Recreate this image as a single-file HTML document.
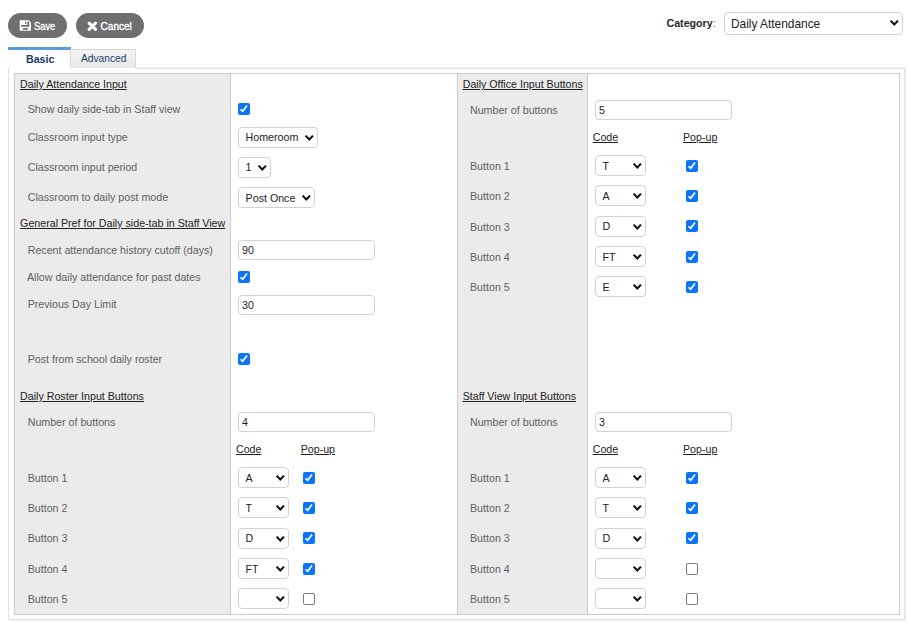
<!DOCTYPE html>
<html><head><meta charset="utf-8"><title>Attendance Preferences</title>
<style>
html,body{margin:0;padding:0;background:#fff;}
body{width:908px;height:623px;position:relative;overflow:hidden;font-family:"Liberation Sans",sans-serif;}
.t{position:absolute;white-space:nowrap;line-height:14px;}
.btn{position:absolute;height:25px;border-radius:13px;background:#6f6f6f;}
.box{position:absolute;border:1px solid #d2d2d2;border-radius:4px;background:#fff;}
.cb{position:absolute;width:12px;height:12px;box-sizing:border-box;border-radius:2px;}
.cb.on{background:#0b75fa;}
.cb.on svg{position:absolute;left:0;top:0;}
.cb.off{border:1px solid #7a7a7a;background:#fff;}
.chev{position:absolute;}
</style></head><body>
<div class="btn" style="left:8px;top:13px;width:59px"></div>
<svg style="position:absolute;left:17px;top:18px" width="16" height="15" viewBox="0 0 16 15"><path fill="#fff" fill-rule="evenodd" d="M2.7 2.3 H11.7 L14 4.6 V12.8 H2.7 Z M4 7 H12.3 V8.8 H4 Z M10.3 3.7 H12.3 V7 H10.3 Z M8 3.7 H9.3 V6 H8 Z M6 9.9 H10.8 V11.8 H6 Z"/></svg>
<div class="t" style="left:34.2px;top:20px;font-size:10px;color:#fff;font-weight:normal;transform:scaleX(0.93);transform-origin:0 0;-webkit-text-stroke:0.35px #fff;">Save</div>
<div class="btn" style="left:76px;top:13px;width:68px"></div>
<svg style="position:absolute;left:87px;top:21px" width="11" height="11" viewBox="0 0 11 11"><path d="M2.2 2.1 L8.5 8.4 M8.5 2.1 L2.2 8.4" stroke="#fff" stroke-width="3" stroke-linecap="round"/></svg>
<div class="t" style="left:100.6px;top:20px;font-size:10px;color:#fff;font-weight:normal;transform:scaleX(1.0);transform-origin:0 0;-webkit-text-stroke:0.35px #fff;">Cancel</div>
<div class="t" style="left:666.5px;top:16px;font-size:10.67px;color:#262626;font-weight:bold;">Category</div>
<div class="t" style="left:713px;top:16px;font-size:10.67px;color:#777;font-weight:normal;">:</div>
<div class="box" style="left:724px;top:12px;width:177px;height:21px"></div>
<div class="t" style="left:731px;top:17px;font-size:11.9px;color:#222;font-weight:normal;">Daily Attendance</div>
<svg class="chev" style="left:888.8px;top:19.1px" width="10.6" height="7.1" viewBox="-1 -1 10.6 7.1"><path d="M0.6 0.6 L4.3 4.5 L8.0 0.6" fill="none" stroke="#111" stroke-width="2.1"/></svg>
<div style="position:absolute;left:8px;top:47px;width:63px;height:3px;background:#5b9bd8"></div>
<div class="t" style="left:26px;top:52px;font-size:10.67px;color:#1d3a63;font-weight:bold;">Basic</div>
<div style="position:absolute;left:70px;top:49px;width:64px;height:18px;border:1px solid #d9d9d9;border-bottom:none;background:linear-gradient(#f4f4f4,#e9e9e9)"></div>
<div class="t" style="left:81px;top:52px;font-size:10.2px;color:#223f69;font-weight:normal;">Advanced</div>
<div style="position:absolute;left:8px;top:68px;width:1px;height:552px;background:#e0e0e0"></div>
<div style="position:absolute;left:8px;top:619px;width:898px;height:1px;background:#e2e2e2"></div>
<div style="position:absolute;left:9px;top:620px;width:897px;height:1px;background:#f1f1f1"></div>
<div style="position:absolute;left:904px;top:67px;width:1px;height:553px;background:#e4e4e4"></div>
<div style="position:absolute;left:905px;top:67px;width:1px;height:554px;background:#efefef"></div>
<div style="position:absolute;left:136px;top:67px;width:769px;height:1px;background:#eeeeee"></div>
<div style="position:absolute;left:136px;top:68px;width:769px;height:1px;background:#e4e4e4"></div>
<div style="position:absolute;left:14px;top:73px;width:884px;height:540px;border:1px solid #cdcdcd;background:#fff"></div>
<div style="position:absolute;left:15px;top:74px;width:215px;height:540px;background:#ebebeb;border-right:1px solid #cdcdcd"></div>
<div style="position:absolute;left:457px;top:74px;width:129px;height:540px;background:#ebebeb;border-left:1px solid #cdcdcd;border-right:1px solid #cdcdcd"></div>
<div class="t" style="left:20.1px;top:77px;font-size:10.67px;color:#222;font-weight:normal;text-decoration:underline;">Daily Attendance Input</div>
<div class="t" style="left:27.7px;top:102px;font-size:10.67px;color:#5f5f5f;font-weight:normal;">Show daily side-tab in Staff view</div>
<div class="cb on" style="left:238px;top:103px"><svg width="12" height="12" viewBox="0 0 12 12"><path d="M2.5 6.3 L4.7 8.2 L9.0 2.6" fill="none" stroke="#fff" stroke-width="1.7"/></svg></div>
<div class="t" style="left:27.7px;top:130px;font-size:10.67px;color:#5f5f5f;font-weight:normal;">Classroom input type</div>
<div class="box" style="left:238px;top:127px;width:78px;height:19px"></div><div class="t" style="left:245.6px;top:130px;font-size:10.67px;color:#222;font-weight:normal;">Homeroom</div><svg class="chev" style="left:303.7px;top:134.3px" width="10.6" height="7.1" viewBox="-1 -1 10.6 7.1"><path d="M0.6 0.6 L4.3 4.5 L8.0 0.6" fill="none" stroke="#111" stroke-width="2.1"/></svg>
<div class="t" style="left:27.7px;top:160px;font-size:10.67px;color:#5f5f5f;font-weight:normal;">Classroom input period</div>
<div class="box" style="left:238px;top:157px;width:31px;height:19px"></div><div class="t" style="left:245.6px;top:160px;font-size:10.67px;color:#222;font-weight:normal;">1</div><svg class="chev" style="left:256.7px;top:164.3px" width="10.6" height="7.1" viewBox="-1 -1 10.6 7.1"><path d="M0.6 0.6 L4.3 4.5 L8.0 0.6" fill="none" stroke="#111" stroke-width="2.1"/></svg>
<div class="t" style="left:27.7px;top:190px;font-size:10.67px;color:#5f5f5f;font-weight:normal;">Classroom to daily post mode</div>
<div class="box" style="left:238px;top:187px;width:75px;height:19px"></div><div class="t" style="left:245.6px;top:191px;font-size:10.67px;color:#222;font-weight:normal;">Post Once</div><svg class="chev" style="left:300.7px;top:194.3px" width="10.6" height="7.1" viewBox="-1 -1 10.6 7.1"><path d="M0.6 0.6 L4.3 4.5 L8.0 0.6" fill="none" stroke="#111" stroke-width="2.1"/></svg>
<div class="t" style="left:20.1px;top:216px;font-size:10.67px;color:#222;font-weight:normal;text-decoration:underline;">General Pref for Daily side-tab in Staff View</div>
<div class="t" style="left:27.7px;top:243px;font-size:10.67px;color:#5f5f5f;font-weight:normal;">Recent attendance history cutoff (days)</div>
<div class="box" style="left:238px;top:240px;width:135px;height:18px"></div><div class="t" style="left:242px;top:243px;font-size:10.67px;color:#222;font-weight:normal;">90</div>
<div class="t" style="left:27px;top:270px;font-size:10.67px;color:#5f5f5f;font-weight:normal;">Allow daily attendance for past dates</div>
<div class="cb on" style="left:238px;top:271px"><svg width="12" height="12" viewBox="0 0 12 12"><path d="M2.5 6.3 L4.7 8.2 L9.0 2.6" fill="none" stroke="#fff" stroke-width="1.7"/></svg></div>
<div class="t" style="left:27.7px;top:297px;font-size:10.67px;color:#5f5f5f;font-weight:normal;">Previous Day Limit</div>
<div class="box" style="left:238px;top:295px;width:135px;height:18px"></div><div class="t" style="left:242px;top:298px;font-size:10.67px;color:#222;font-weight:normal;">30</div>
<div class="t" style="left:27.7px;top:352px;font-size:10.67px;color:#5f5f5f;font-weight:normal;">Post from school daily roster</div>
<div class="cb on" style="left:238px;top:353px"><svg width="12" height="12" viewBox="0 0 12 12"><path d="M2.5 6.3 L4.7 8.2 L9.0 2.6" fill="none" stroke="#fff" stroke-width="1.7"/></svg></div>
<div class="t" style="left:20.1px;top:389px;font-size:10.67px;color:#222;font-weight:normal;text-decoration:underline;">Daily Roster Input Buttons</div>
<div class="t" style="left:27.7px;top:415px;font-size:10.67px;color:#5f5f5f;font-weight:normal;">Number of buttons</div>
<div class="box" style="left:238px;top:412px;width:135px;height:18px"></div><div class="t" style="left:242px;top:415px;font-size:10.67px;color:#222;font-weight:normal;">4</div>
<div class="t" style="left:236px;top:442px;font-size:10.67px;color:#222;font-weight:normal;text-decoration:underline;">Code</div>
<div class="t" style="left:300.7px;top:442px;font-size:10.67px;color:#222;font-weight:normal;text-decoration:underline;">Pop-up</div>
<div class="t" style="left:27.7px;top:471px;font-size:10.67px;color:#5f5f5f;font-weight:normal;">Button 1</div>
<div class="box" style="left:238px;top:467px;width:49px;height:19px"></div><div class="t" style="left:245.6px;top:471px;font-size:10.67px;color:#222;font-weight:normal;">A</div><svg class="chev" style="left:274.7px;top:474.3px" width="10.6" height="7.1" viewBox="-1 -1 10.6 7.1"><path d="M0.6 0.6 L4.3 4.5 L8.0 0.6" fill="none" stroke="#111" stroke-width="2.1"/></svg>
<div class="cb on" style="left:303px;top:472px"><svg width="12" height="12" viewBox="0 0 12 12"><path d="M2.5 6.3 L4.7 8.2 L9.0 2.6" fill="none" stroke="#fff" stroke-width="1.7"/></svg></div>
<div class="t" style="left:27.7px;top:501px;font-size:10.67px;color:#5f5f5f;font-weight:normal;">Button 2</div>
<div class="box" style="left:238px;top:497px;width:49px;height:19px"></div><div class="t" style="left:245.6px;top:501px;font-size:10.67px;color:#222;font-weight:normal;">T</div><svg class="chev" style="left:274.7px;top:504.3px" width="10.6" height="7.1" viewBox="-1 -1 10.6 7.1"><path d="M0.6 0.6 L4.3 4.5 L8.0 0.6" fill="none" stroke="#111" stroke-width="2.1"/></svg>
<div class="cb on" style="left:303px;top:502px"><svg width="12" height="12" viewBox="0 0 12 12"><path d="M2.5 6.3 L4.7 8.2 L9.0 2.6" fill="none" stroke="#fff" stroke-width="1.7"/></svg></div>
<div class="t" style="left:27.7px;top:531px;font-size:10.67px;color:#5f5f5f;font-weight:normal;">Button 3</div>
<div class="box" style="left:238px;top:528px;width:49px;height:19px"></div><div class="t" style="left:245.6px;top:531px;font-size:10.67px;color:#222;font-weight:normal;">D</div><svg class="chev" style="left:274.7px;top:535.3px" width="10.6" height="7.1" viewBox="-1 -1 10.6 7.1"><path d="M0.6 0.6 L4.3 4.5 L8.0 0.6" fill="none" stroke="#111" stroke-width="2.1"/></svg>
<div class="cb on" style="left:303px;top:532px"><svg width="12" height="12" viewBox="0 0 12 12"><path d="M2.5 6.3 L4.7 8.2 L9.0 2.6" fill="none" stroke="#fff" stroke-width="1.7"/></svg></div>
<div class="t" style="left:27.7px;top:562px;font-size:10.67px;color:#5f5f5f;font-weight:normal;">Button 4</div>
<div class="box" style="left:238px;top:558px;width:49px;height:19px"></div><div class="t" style="left:245.6px;top:562px;font-size:10.67px;color:#222;font-weight:normal;">FT</div><svg class="chev" style="left:274.7px;top:565.3px" width="10.6" height="7.1" viewBox="-1 -1 10.6 7.1"><path d="M0.6 0.6 L4.3 4.5 L8.0 0.6" fill="none" stroke="#111" stroke-width="2.1"/></svg>
<div class="cb on" style="left:303px;top:563px"><svg width="12" height="12" viewBox="0 0 12 12"><path d="M2.5 6.3 L4.7 8.2 L9.0 2.6" fill="none" stroke="#fff" stroke-width="1.7"/></svg></div>
<div class="t" style="left:27.7px;top:592px;font-size:10.67px;color:#5f5f5f;font-weight:normal;">Button 5</div>
<div class="box" style="left:238px;top:588px;width:49px;height:19px"></div><svg class="chev" style="left:274.7px;top:595.3px" width="10.6" height="7.1" viewBox="-1 -1 10.6 7.1"><path d="M0.6 0.6 L4.3 4.5 L8.0 0.6" fill="none" stroke="#111" stroke-width="2.1"/></svg>
<div class="cb off" style="left:303px;top:593px"></div>
<div class="t" style="left:462.7px;top:77px;font-size:10.67px;color:#222;font-weight:normal;text-decoration:underline;">Daily Office Input Buttons</div>
<div class="t" style="left:470px;top:103px;font-size:10.67px;color:#5f5f5f;font-weight:normal;">Number of buttons</div>
<div class="box" style="left:595px;top:100px;width:135px;height:18px"></div><div class="t" style="left:599px;top:103px;font-size:10.67px;color:#222;font-weight:normal;">5</div>
<div class="t" style="left:592.7px;top:130px;font-size:10.67px;color:#222;font-weight:normal;text-decoration:underline;">Code</div>
<div class="t" style="left:683px;top:130px;font-size:10.67px;color:#222;font-weight:normal;text-decoration:underline;">Pop-up</div>
<div class="t" style="left:470px;top:159px;font-size:10.67px;color:#5f5f5f;font-weight:normal;">Button 1</div>
<div class="box" style="left:595px;top:155px;width:49px;height:19px"></div><div class="t" style="left:602.6px;top:159px;font-size:10.67px;color:#222;font-weight:normal;">T</div><svg class="chev" style="left:631.7px;top:162.3px" width="10.6" height="7.1" viewBox="-1 -1 10.6 7.1"><path d="M0.6 0.6 L4.3 4.5 L8.0 0.6" fill="none" stroke="#111" stroke-width="2.1"/></svg>
<div class="cb on" style="left:686px;top:160px"><svg width="12" height="12" viewBox="0 0 12 12"><path d="M2.5 6.3 L4.7 8.2 L9.0 2.6" fill="none" stroke="#fff" stroke-width="1.7"/></svg></div>
<div class="t" style="left:470px;top:189px;font-size:10.67px;color:#5f5f5f;font-weight:normal;">Button 2</div>
<div class="box" style="left:595px;top:185px;width:49px;height:19px"></div><div class="t" style="left:602.6px;top:189px;font-size:10.67px;color:#222;font-weight:normal;">A</div><svg class="chev" style="left:631.7px;top:192.3px" width="10.6" height="7.1" viewBox="-1 -1 10.6 7.1"><path d="M0.6 0.6 L4.3 4.5 L8.0 0.6" fill="none" stroke="#111" stroke-width="2.1"/></svg>
<div class="cb on" style="left:686px;top:190px"><svg width="12" height="12" viewBox="0 0 12 12"><path d="M2.5 6.3 L4.7 8.2 L9.0 2.6" fill="none" stroke="#fff" stroke-width="1.7"/></svg></div>
<div class="t" style="left:470px;top:220px;font-size:10.67px;color:#5f5f5f;font-weight:normal;">Button 3</div>
<div class="box" style="left:595px;top:216px;width:49px;height:19px"></div><div class="t" style="left:602.6px;top:219px;font-size:10.67px;color:#222;font-weight:normal;">D</div><svg class="chev" style="left:631.7px;top:223.3px" width="10.6" height="7.1" viewBox="-1 -1 10.6 7.1"><path d="M0.6 0.6 L4.3 4.5 L8.0 0.6" fill="none" stroke="#111" stroke-width="2.1"/></svg>
<div class="cb on" style="left:686px;top:220px"><svg width="12" height="12" viewBox="0 0 12 12"><path d="M2.5 6.3 L4.7 8.2 L9.0 2.6" fill="none" stroke="#fff" stroke-width="1.7"/></svg></div>
<div class="t" style="left:470px;top:250px;font-size:10.67px;color:#5f5f5f;font-weight:normal;">Button 4</div>
<div class="box" style="left:595px;top:246px;width:49px;height:19px"></div><div class="t" style="left:602.6px;top:250px;font-size:10.67px;color:#222;font-weight:normal;">FT</div><svg class="chev" style="left:631.7px;top:253.3px" width="10.6" height="7.1" viewBox="-1 -1 10.6 7.1"><path d="M0.6 0.6 L4.3 4.5 L8.0 0.6" fill="none" stroke="#111" stroke-width="2.1"/></svg>
<div class="cb on" style="left:686px;top:251px"><svg width="12" height="12" viewBox="0 0 12 12"><path d="M2.5 6.3 L4.7 8.2 L9.0 2.6" fill="none" stroke="#fff" stroke-width="1.7"/></svg></div>
<div class="t" style="left:470px;top:280px;font-size:10.67px;color:#5f5f5f;font-weight:normal;">Button 5</div>
<div class="box" style="left:595px;top:276px;width:49px;height:19px"></div><div class="t" style="left:602.6px;top:280px;font-size:10.67px;color:#222;font-weight:normal;">E</div><svg class="chev" style="left:631.7px;top:283.3px" width="10.6" height="7.1" viewBox="-1 -1 10.6 7.1"><path d="M0.6 0.6 L4.3 4.5 L8.0 0.6" fill="none" stroke="#111" stroke-width="2.1"/></svg>
<div class="cb on" style="left:686px;top:281px"><svg width="12" height="12" viewBox="0 0 12 12"><path d="M2.5 6.3 L4.7 8.2 L9.0 2.6" fill="none" stroke="#fff" stroke-width="1.7"/></svg></div>
<div class="t" style="left:462.7px;top:389px;font-size:10.67px;color:#222;font-weight:normal;text-decoration:underline;">Staff View Input Buttons</div>
<div class="t" style="left:470px;top:415px;font-size:10.67px;color:#5f5f5f;font-weight:normal;">Number of buttons</div>
<div class="box" style="left:595px;top:412px;width:135px;height:18px"></div><div class="t" style="left:599px;top:415px;font-size:10.67px;color:#222;font-weight:normal;">3</div>
<div class="t" style="left:592.7px;top:442px;font-size:10.67px;color:#222;font-weight:normal;text-decoration:underline;">Code</div>
<div class="t" style="left:683px;top:442px;font-size:10.67px;color:#222;font-weight:normal;text-decoration:underline;">Pop-up</div>
<div class="t" style="left:470px;top:471px;font-size:10.67px;color:#5f5f5f;font-weight:normal;">Button 1</div>
<div class="box" style="left:595px;top:467px;width:49px;height:19px"></div><div class="t" style="left:602.6px;top:471px;font-size:10.67px;color:#222;font-weight:normal;">A</div><svg class="chev" style="left:631.7px;top:474.3px" width="10.6" height="7.1" viewBox="-1 -1 10.6 7.1"><path d="M0.6 0.6 L4.3 4.5 L8.0 0.6" fill="none" stroke="#111" stroke-width="2.1"/></svg>
<div class="cb on" style="left:686px;top:472px"><svg width="12" height="12" viewBox="0 0 12 12"><path d="M2.5 6.3 L4.7 8.2 L9.0 2.6" fill="none" stroke="#fff" stroke-width="1.7"/></svg></div>
<div class="t" style="left:470px;top:501px;font-size:10.67px;color:#5f5f5f;font-weight:normal;">Button 2</div>
<div class="box" style="left:595px;top:497px;width:49px;height:19px"></div><div class="t" style="left:602.6px;top:501px;font-size:10.67px;color:#222;font-weight:normal;">T</div><svg class="chev" style="left:631.7px;top:504.3px" width="10.6" height="7.1" viewBox="-1 -1 10.6 7.1"><path d="M0.6 0.6 L4.3 4.5 L8.0 0.6" fill="none" stroke="#111" stroke-width="2.1"/></svg>
<div class="cb on" style="left:686px;top:502px"><svg width="12" height="12" viewBox="0 0 12 12"><path d="M2.5 6.3 L4.7 8.2 L9.0 2.6" fill="none" stroke="#fff" stroke-width="1.7"/></svg></div>
<div class="t" style="left:470px;top:531px;font-size:10.67px;color:#5f5f5f;font-weight:normal;">Button 3</div>
<div class="box" style="left:595px;top:528px;width:49px;height:19px"></div><div class="t" style="left:602.6px;top:531px;font-size:10.67px;color:#222;font-weight:normal;">D</div><svg class="chev" style="left:631.7px;top:535.3px" width="10.6" height="7.1" viewBox="-1 -1 10.6 7.1"><path d="M0.6 0.6 L4.3 4.5 L8.0 0.6" fill="none" stroke="#111" stroke-width="2.1"/></svg>
<div class="cb on" style="left:686px;top:532px"><svg width="12" height="12" viewBox="0 0 12 12"><path d="M2.5 6.3 L4.7 8.2 L9.0 2.6" fill="none" stroke="#fff" stroke-width="1.7"/></svg></div>
<div class="t" style="left:470px;top:562px;font-size:10.67px;color:#5f5f5f;font-weight:normal;">Button 4</div>
<div class="box" style="left:595px;top:558px;width:49px;height:19px"></div><svg class="chev" style="left:631.7px;top:565.3px" width="10.6" height="7.1" viewBox="-1 -1 10.6 7.1"><path d="M0.6 0.6 L4.3 4.5 L8.0 0.6" fill="none" stroke="#111" stroke-width="2.1"/></svg>
<div class="cb off" style="left:686px;top:563px"></div>
<div class="t" style="left:470px;top:592px;font-size:10.67px;color:#5f5f5f;font-weight:normal;">Button 5</div>
<div class="box" style="left:595px;top:588px;width:49px;height:19px"></div><svg class="chev" style="left:631.7px;top:595.3px" width="10.6" height="7.1" viewBox="-1 -1 10.6 7.1"><path d="M0.6 0.6 L4.3 4.5 L8.0 0.6" fill="none" stroke="#111" stroke-width="2.1"/></svg>
<div class="cb off" style="left:686px;top:593px"></div>
</body></html>
